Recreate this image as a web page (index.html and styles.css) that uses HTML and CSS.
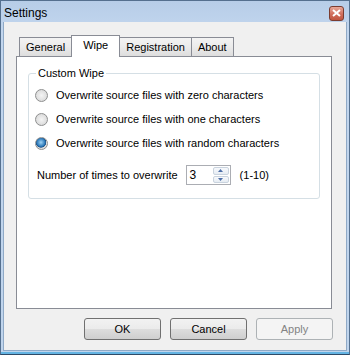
FILE: index.html
```html
<!DOCTYPE html>
<html lang="en">
<head>
    <meta charset="UTF-8">
    <title>Settings</title>
    <link rel="stylesheet" href="styles.css">
</head>
<body>
    <div class="window">
        <div class="titlebar">
            <span class="title">Settings</span>
            <span class="close">
                <svg width="9" height="8" viewBox="0 0 9 8">
                    <path d="M1 1 L8 7 M8 1 L1 7" stroke="#fff" stroke-width="2"/>
                </svg>
            </span>
        </div>
        <div class="client">
            <div class="tabs">
                <div class="tab">General</div>
                <div class="tab active">Wipe</div>
                <div class="tab">Registration</div>
                <div class="tab">About</div>
            </div>
            <div class="panel">
                <fieldset class="group">
                    <legend>Custom Wipe</legend>
                    <div class="option"><span class="radio"></span>Overwrite source files with zero characters</div>
                    <div class="option"><span class="radio"></span>Overwrite source files with one characters</div>
                    <div class="option"><span class="radio checked"></span>Overwrite source files with random characters</div>
                    <div class="count-row">
                        <span>Number of times to overwrite</span>
                        <div class="spin">
                            <span class="spin-value">3</span>
                            <div class="spin-buttons">
                                <span class="spin-btn">
                                    <svg width="5" height="3" viewBox="0 0 5 3"><path d="M0 3 L2.5 0 L5 3 Z" fill="#4d6fa8"/></svg>
                                </span>
                                <span class="spin-btn">
                                    <svg width="5" height="3" viewBox="0 0 5 3"><path d="M0 0 L2.5 3 L5 0 Z" fill="#4d6fa8"/></svg>
                                </span>
                            </div>
                        </div>
                        <span>(1-10)</span>
                    </div>
                </fieldset>
            </div>
            <div class="buttons">
                <button>OK</button>
                <button>Cancel</button>
                <button disabled>Apply</button>
            </div>
        </div>
    </div>
</body>
</html>
```

FILE: styles.css
```css
body {
    margin: 0;
    padding: 0;
    font-family: "Liberation Sans", Arial, sans-serif;
    font-size: 11px;
    color: #000;
}
.window {
    width: 350px;
    height: 355px;
    box-sizing: border-box;
    border: 1px solid #55708f;
    border-bottom-color: #2f4a66;
    background: linear-gradient(#b7cde8, #c2d6ee 30px, #bfd4ec);
    padding: 0 3px 3px 3px;
    display: flex;
    flex-direction: column;
    box-shadow: inset 0 -2px 0 #63b3e2;
}
.titlebar {
    height: 21px;
    display: flex;
    align-items: center;
    justify-content: space-between;
}
.title {
    font-size: 12px;
    margin-top: 2px;
}
.close {
    width: 13px;
    height: 13px;
    margin-right: 2px;
    margin-top: 3px;
    border: 1px solid #7b3c30;
    border-radius: 3px;
    background: linear-gradient(#e9a899, #d06e5c 55%, #c0553f);
    display: flex;
    align-items: center;
    justify-content: center;
}
.client {
    flex: 1;
    background: #f0f0f0;
    padding: 13px 14px 0 12px;
    border: 1px solid #8fa9c6;
    border-top: none;
    margin: 0 -1px;
}
.tabs {
    display: flex;
    align-items: flex-end;
    height: 21px;
    padding-left: 3px;
}
.tab {
    height: 18px;
    line-height: 18px;
    padding: 0 6px;
    border: 1px solid #898c95;
    border-bottom: none;
    border-right: none;
    background: linear-gradient(#f3f3f3, #ebebeb 50%, #dddddd);
}
.tab:last-child {
    border-right: 1px solid #898c95;
}
.tab.active {
    height: 21px;
    line-height: 19px;
    padding: 0 11px;
    background: #fff;
    border-right: 1px solid #898c95;
    margin-bottom: -1px;
    position: relative;
    z-index: 1;
}
.tab.active + .tab {
    border-left: none;
}
.panel {
    height: 253px;
    box-sizing: border-box;
    background: #fff;
    border: 1px solid #898c95;
    padding: 10px 11px 0 11px;
}
.group {
    margin: 0;
    border: 1px solid #d5dfe5;
    border-radius: 3px;
    padding: 3px 6px 13px 6px;
}
.group legend {
    padding: 0 2px;
    margin-left: 1px;
    line-height: 13px;
}
.option {
    height: 24px;
    display: flex;
    align-items: center;
    gap: 8px;
}
.radio {
    width: 11px;
    height: 11px;
    border-radius: 50%;
    border: 1px solid #8e8f8f;
    background: radial-gradient(circle at 50% 50%, #f4f4f4 0, #e0e0e0 60%, #d2d2d2 100%);
    box-sizing: content-box;
}
.radio.checked {
    background: radial-gradient(circle at 45% 40%, #9fd3f5 0, #2b78b8 45%, #1b4f85 55%, #e0e0e0 62%, #d4d4d4 100%);
}
.count-row {
    margin-top: 10px;
    height: 20px;
    display: flex;
    align-items: center;
    padding-left: 2px;
    gap: 8px;
}
.spin {
    width: 45px;
    height: 20px;
    box-sizing: border-box;
    border: 1px solid #abadb3;
    background: #fff;
    display: flex;
    margin-right: 1px;
}
.spin-value {
    flex: 1;
    font-size: 12px;
    line-height: 18px;
    padding-left: 3px;
}
.spin-buttons {
    width: 16px;
    display: flex;
    flex-direction: column;
    padding: 1px 1px 1px 0;
    gap: 1px;
}
.spin-btn {
    flex: 1;
    border: 1px solid #c9d3de;
    border-radius: 2px;
    background: linear-gradient(#f7f9fc, #e6ecf3);
    display: flex;
    align-items: center;
    justify-content: center;
}
.buttons {
    display: flex;
    justify-content: flex-end;
    gap: 9px;
    margin-top: 9px;
    margin-right: -1px;
}
.buttons button {
    width: 77px;
    height: 22px;
    font-family: "Liberation Sans", Arial, sans-serif;
    font-size: 11px;
    color: #000;
    border: 1px solid #707070;
    border-radius: 3px;
    background: linear-gradient(#f2f2f2, #ebebeb 50%, #dddddd 51%, #cfcfcf);
    padding: 0;
}
.buttons button:disabled {
    border-color: #adb2b5;
    background: #f4f4f4;
    color: #838383;
}
```
